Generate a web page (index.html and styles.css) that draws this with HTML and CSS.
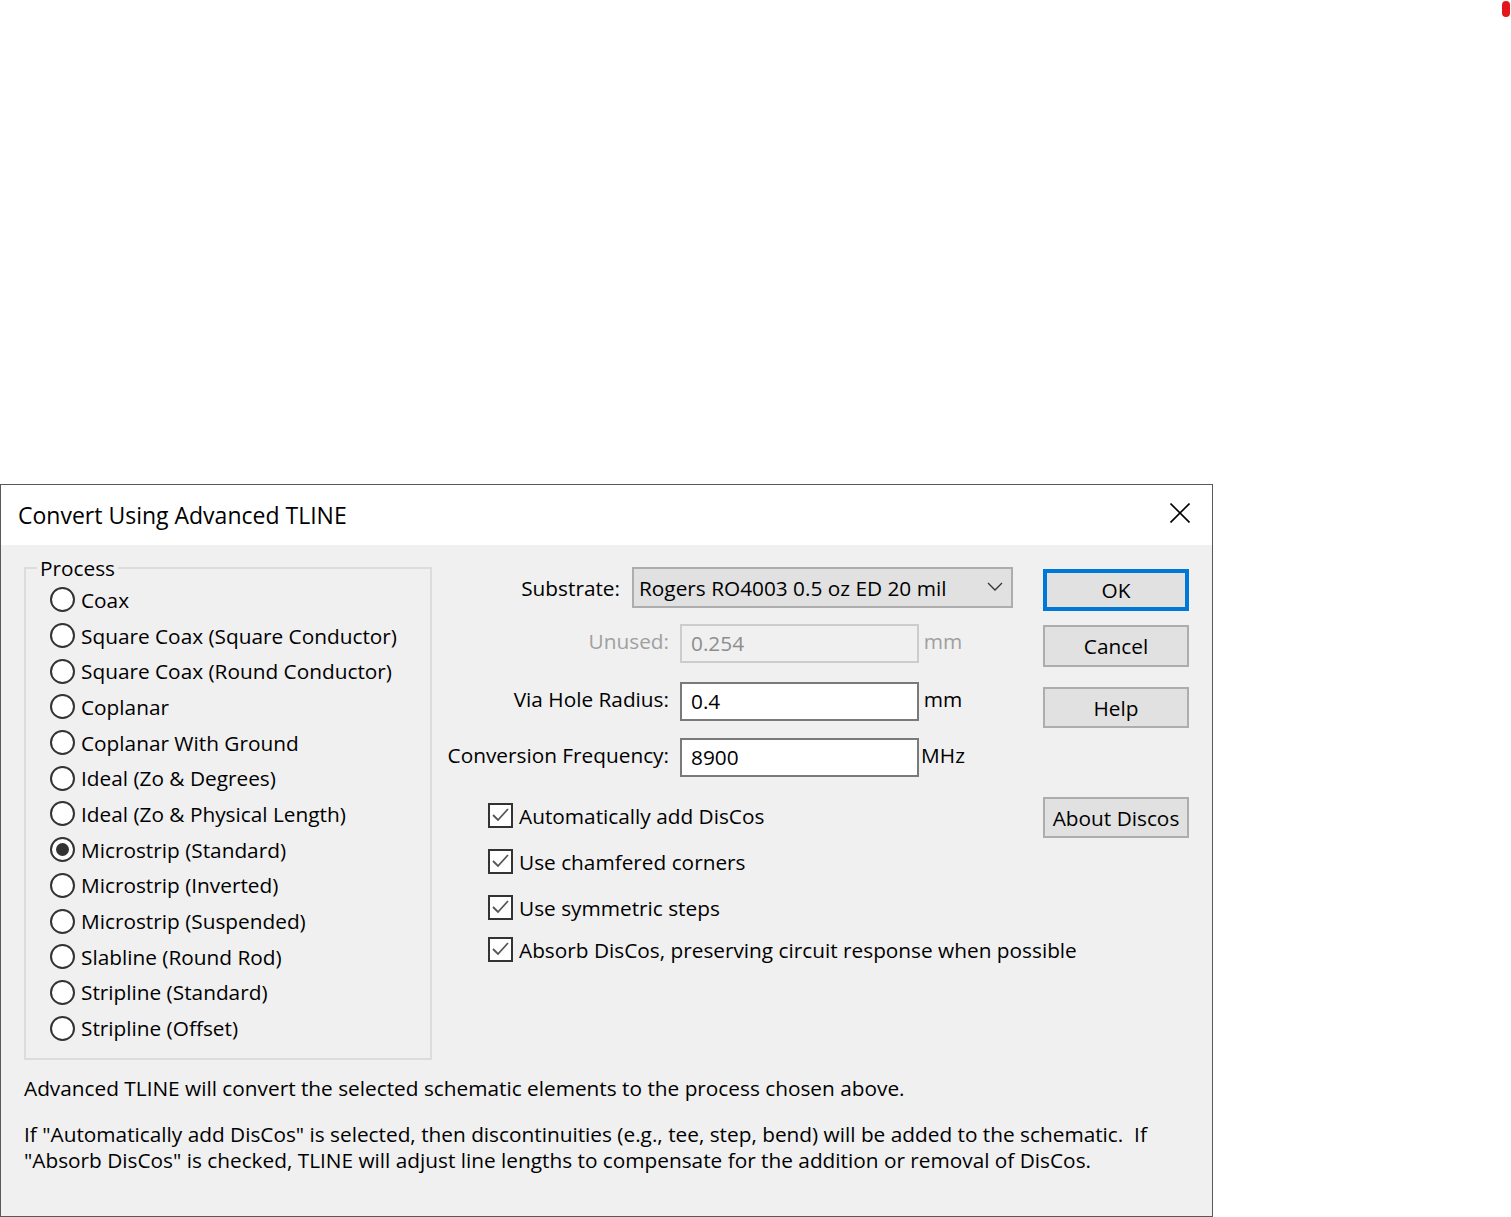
FILE: index.html
```html
<!DOCTYPE html>
<html lang="en">
<head>
<meta charset="utf-8">
<title>Convert Using Advanced TLINE</title>
<link rel="stylesheet" href="styles.css">
</head>
<body>
<span class="marker"></span>
<div class="dialog">
  <div class="titlebar">
    <span class="title">Convert Using Advanced TLINE</span>
    <svg class="close" width="20" height="20" viewBox="0 0 20 20"><path d="M0.5 0.5 L19.5 19.5 M19.5 0.5 L0.5 19.5" stroke="#000" stroke-width="1.6" fill="none"/></svg>
  </div>
  <div class="client">
    <div class="top">
      <fieldset class="group">
        <legend class="legend">Process</legend>
        <div class="radio"><span class="dot"></span>Coax</div>
        <div class="radio"><span class="dot"></span>Square Coax (Square Conductor)</div>
        <div class="radio"><span class="dot"></span>Square Coax (Round Conductor)</div>
        <div class="radio"><span class="dot"></span>Coplanar</div>
        <div class="radio"><span class="dot"></span>Coplanar With Ground</div>
        <div class="radio"><span class="dot"></span>Ideal (Zo &amp; Degrees)</div>
        <div class="radio"><span class="dot"></span>Ideal (Zo &amp; Physical Length)</div>
        <div class="radio"><span class="dot checked"></span>Microstrip (Standard)</div>
        <div class="radio"><span class="dot"></span>Microstrip (Inverted)</div>
        <div class="radio"><span class="dot"></span>Microstrip (Suspended)</div>
        <div class="radio"><span class="dot"></span>Slabline (Round Rod)</div>
        <div class="radio"><span class="dot"></span>Stripline (Standard)</div>
        <div class="radio"><span class="dot"></span>Stripline (Offset)</div>
      </fieldset>

      <div class="form">
        <div class="row row-sub">
          <span class="lbl lbl-sub">Substrate:</span>
          <div class="select">
            <span class="select-text">Rogers RO4003 0.5 oz ED 20 mil</span>
            <svg class="chev" width="16" height="9" viewBox="0 0 16 9"><path d="M1 1 L8 8 L15 1" stroke="#333" stroke-width="1.3" fill="none"/></svg>
          </div>
        </div>
        <div class="row row-edit row-unused">
          <span class="lbl disabled">Unused:</span>
          <div class="edit edit-disabled">0.254</div>
          <span class="unit disabled">mm</span>
        </div>
        <div class="row row-edit row-via">
          <span class="lbl">Via Hole Radius:</span>
          <div class="edit">0.4</div>
          <span class="unit">mm</span>
        </div>
        <div class="row row-edit row-freq">
          <span class="lbl">Conversion Frequency:</span>
          <div class="edit">8900</div>
          <span class="unit">MHz</span>
        </div>

        <div class="checks">
          <div class="check check-1"><span class="box"><svg width="21" height="21" viewBox="0 0 21 21"><path d="M3 10 L8 15 L18 4" stroke="#555" stroke-width="1.8" fill="none"/></svg></span>Automatically add DisCos</div>
          <div class="check check-2"><span class="box"><svg width="21" height="21" viewBox="0 0 21 21"><path d="M3 10 L8 15 L18 4" stroke="#555" stroke-width="1.8" fill="none"/></svg></span>Use chamfered corners</div>
          <div class="check check-3"><span class="box"><svg width="21" height="21" viewBox="0 0 21 21"><path d="M3 10 L8 15 L18 4" stroke="#555" stroke-width="1.8" fill="none"/></svg></span>Use symmetric steps</div>
          <div class="check check-4"><span class="box"><svg width="21" height="21" viewBox="0 0 21 21"><path d="M3 10 L8 15 L18 4" stroke="#555" stroke-width="1.8" fill="none"/></svg></span>Absorb DisCos, preserving circuit response when possible</div>
        </div>
      </div>

      <div class="buttons">
        <div class="btn btn-default">OK</div>
        <div class="btn btn-cancel">Cancel</div>
        <div class="btn btn-help">Help</div>
        <div class="btn btn-about">About Discos</div>
      </div>
    </div>

    <p class="note note-1">Advanced TLINE will convert the selected schematic elements to the process chosen above.</p>
    <p class="note note-2">If "Automatically add DisCos" is selected, then discontinuities (e.g., tee, step, bend) will be added to the schematic.&nbsp; If<br>"Absorb DisCos" is checked, TLINE will adjust line lengths to compensate for the addition or removal of DisCos.</p>
  </div>
</div>
</body>
</html>
```
FILE: styles.css
```css
html, body {
  margin: 0;
  padding: 0;
}
body {
  background: #ffffff;
  font-family: "Open Sans", "Noto Sans", sans-serif;
  font-size: 20.8px;
  color: #000;
  position: relative;
  overflow: hidden;
  height: 1217px;
}

.marker {
  position: absolute;
  top: 1px;
  left: 1502px;
  width: 8px;
  height: 16px;
  border-radius: 4px;
  background: #e3161e;
}

.dialog {
  margin-top: 484px;
  width: 1213px;
  height: 733px;
  box-sizing: border-box;
  border: 1px solid #595959;
  display: flex;
  flex-direction: column;
}

.titlebar {
  height: 60px;
  flex: none;
  background: #fff;
  display: flex;
  align-items: center;
  justify-content: space-between;
  padding: 0 22px 0 17px;
}
.title {
  font-size: 23px;
  line-height: 28px;
}
.close {
  display: block;
  margin-top: -4px;
}

.client {
  flex: 1;
  background: #f0f0f0;
  padding-left: 23px;
}

.top {
  display: flex;
  align-items: flex-start;
}

/* Process group */
.group {
  flex: none;
  margin: 9px 0 0 0;
  width: 408px;
  box-sizing: border-box;
  border: 2px solid #dcdcdc;
  padding: 0 0 12px 24px;
  min-width: 0;
}
.legend {
  margin-left: -13px;
  padding: 0 3px;
  line-height: 28px;
}
.radio {
  height: 35.7px;
  display: flex;
  align-items: center;
  white-space: nowrap;
}
.dot {
  width: 25px;
  height: 25px;
  box-sizing: border-box;
  border: 2px solid #333;
  border-radius: 50%;
  background: #fff;
  margin-right: 6px;
  flex: none;
  display: flex;
  align-items: center;
  justify-content: center;
}
.dot.checked::after {
  content: "";
  width: 13px;
  height: 13px;
  border-radius: 50%;
  background: #333;
}

/* form column */
.form {
  flex: 1;
  min-width: 0;
  padding-top: 22px;
  padding-left: 8px;
}
.row {
  display: flex;
  align-items: center;
  white-space: nowrap;
}
.lbl {
  width: 229px;
  text-align: right;
  margin-right: 11px;
  flex: none;
}
.lbl-sub {
  width: 180px;
  margin-right: 12px;
}
.row-edit .lbl,
.row-edit .unit {
  padding-bottom: 5px;
}
.disabled {
  color: #a0a0a0;
}
.row-sub { height: 41px; }
.row-unused { margin-top: 16px; }
.row-via { margin-top: 19px; }
.row-freq { margin-top: 17px; }

.select {
  width: 381px;
  height: 41px;
  flex: none;
  box-sizing: border-box;
  border: 2px solid #adadad;
  background: #e1e1e1;
  display: flex;
  align-items: center;
  justify-content: space-between;
  padding: 0 8px 0 5px;
}
.chev { display: block; margin-top: -2px; }

.edit {
  width: 239px;
  height: 39px;
  box-sizing: border-box;
  border: 2px solid #7a7a7a;
  background: #fff;
  padding: 0 0 2px 9px;
  display: flex;
  align-items: center;
  flex: none;
}
.edit-disabled {
  border-color: #cccccc;
  background: #f0f0f0;
  color: #8d8d8d;
}
.unit {
  width: 48px;
  text-align: center;
  flex: none;
}

/* checkboxes */
.checks {
  margin-top: 22.5px;
  padding-left: 48px;
}
.check {
  height: 32px;
  display: flex;
  align-items: center;
  white-space: nowrap;
}
.check-2, .check-3 { margin-top: 14px; }
.check-4 { margin-top: 10px; }
.box {
  width: 25px;
  height: 25px;
  box-sizing: border-box;
  border: 2px solid #333;
  background: #fff;
  margin-right: 6px;
  flex: none;
  display: flex;
  align-items: center;
  justify-content: center;
}
.box svg { display: block; }

/* buttons */
.buttons {
  width: 146px;
  flex: none;
  margin-right: 23px;
  padding-top: 24px;
}
.btn {
  box-sizing: border-box;
  height: 42px;
  border: 2px solid #adadad;
  background: #e1e1e1;
  display: flex;
  align-items: center;
  justify-content: center;
  white-space: nowrap;
}
.btn-default { border: 4px solid #0078d7; }
.btn-cancel { margin-top: 14px; }
.btn-help { margin-top: 20px; height: 41px; }
.btn-about { margin-top: 69px; height: 41px; }

/* notes */
.note {
  margin: 0;
  line-height: 26px;
  white-space: nowrap;
}
.note-1 { margin-top: 15.5px; }
.note-2 { margin-top: 20px; }
```
